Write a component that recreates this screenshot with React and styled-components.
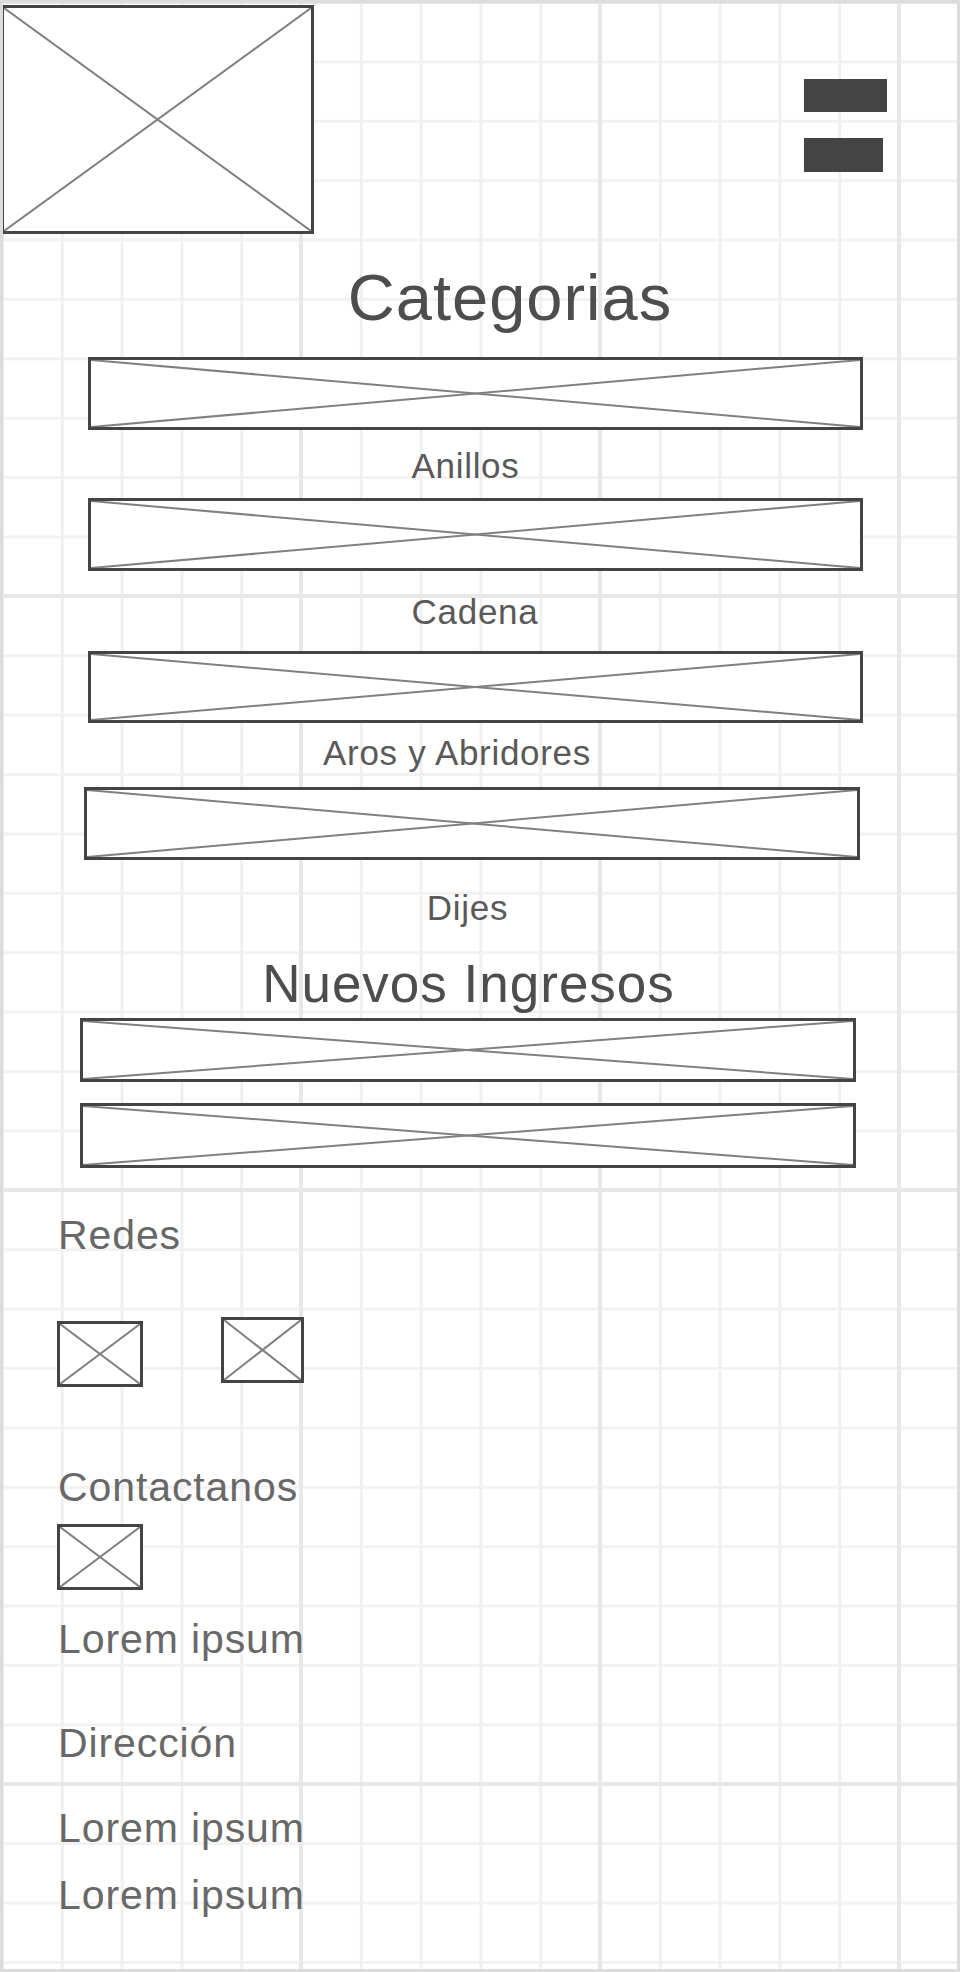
import React from 'react';
import styled, { createGlobalStyle } from 'styled-components';

const GlobalStyle = createGlobalStyle`
  html, body {
    margin: 0;
    padding: 0;
    background: #ffffff;
  }
  body {
    font-family: "Liberation Sans", Arial, sans-serif;
  }
`;

const Page = styled.div`
  box-sizing: border-box;
  width: 960px;
  height: 1972px;
  border: 3px solid #dcdcdc;
  overflow: hidden;
  display: flex;
  flex-direction: column;
  background-color: #ffffff;
  background-image:
    linear-gradient(to right, #e8e8e8 4px, transparent 4px),
    linear-gradient(to bottom, #e8e8e8 4px, transparent 4px),
    linear-gradient(to right, #f0f0f0 3px, transparent 3px),
    linear-gradient(to bottom, #f2f2f2 3px, transparent 3px);
  background-size: 299px 100%, 100% 594px, 59.8px 100%, 100% 59.4px;
  background-position: -3px 0, 0 -3px, -2px 0, 0 -2px;
`;

const Header = styled.header`
  display: flex;
  justify-content: space-between;
  align-items: flex-start;
`;

const Menu = styled.div`
  display: flex;
  flex-direction: column;
  align-items: flex-start;
  gap: 26px;
  margin: 76px 70px 0 0;
`;

const MenuBar = styled.span`
  display: block;
  width: ${p => p.$w}px;
  height: ${p => p.$h}px;
  background: #444444;
`;

const Frame = styled.div`
  box-sizing: border-box;
  flex-shrink: 0;
  width: ${p => p.$w}px;
  height: ${p => p.$h}px;
  margin-left: ${p => p.$left || 0}px;
  margin-top: ${p => p.$top || 0}px;
  border: 3px solid #444444;
  background: #ffffff;

  svg {
    display: block;
    width: 100%;
    height: 100%;
  }
  line {
    stroke: #808080;
    stroke-width: 2;
    vector-effect: non-scaling-stroke;
  }
`;

const Title = styled.h2`
  margin: ${p => p.$top}px 0 0 0;
  padding-left: ${p => p.$pl || 0}px;
  padding-right: ${p => p.$pr || 0}px;
  font-size: ${p => p.$size}px;
  line-height: 1;
  font-weight: 400;
  letter-spacing: 1px;
  color: #4d4d4d;
  text-align: center;
`;

const Label = styled.p`
  margin: ${p => p.$top}px 0 0 0;
  padding-right: ${p => p.$pr || 0}px;
  font-size: 35px;
  line-height: 1;
  letter-spacing: 0.7px;
  color: #595959;
  text-align: center;
`;

const Footer = styled.footer`
  display: flex;
  flex-direction: column;
  align-items: flex-start;
  padding-left: 54px;
`;

const FooterText = styled.p`
  margin: ${p => p.$top}px 0 0 0;
  padding-left: 1px;
  font-size: 41px;
  line-height: 1;
  letter-spacing: 0.9px;
  color: #686868;
`;

const SocialRow = styled.div`
  display: flex;
  align-items: flex-start;
  gap: 78px;
  margin-top: 61px;
`;

function Placeholder(props) {
  return (
    <Frame {...props}>
      <svg viewBox="0 0 100 100" preserveAspectRatio="none">
        <line x1="0" y1="0" x2="100" y2="100" />
        <line x1="0" y1="100" x2="100" y2="0" />
      </svg>
    </Frame>
  );
}

const categorias = [
  { name: 'Anillos', bar: { top: 27, h: 73, left: 85, w: 775 }, labelTop: 18, pr: 29 },
  { name: 'Cadena', bar: { top: 15, h: 73, left: 85, w: 775 }, labelTop: 23, pr: 10 },
  { name: 'Aros y Abridores', bar: { top: 22, h: 72, left: 85, w: 775 }, labelTop: 12, pr: 46 },
  { name: 'Dijes', bar: { top: 17, h: 73, left: 81, w: 776 }, labelTop: 30, pr: 25 },
];

function App() {
  return (
    <>
      <GlobalStyle />
      <Page>
        <Header>
          <Placeholder $w={313} $h={229} $left={-2} $top={2} />
          <Menu>
            <MenuBar $w={83} $h={33} />
            <MenuBar $w={79} $h={34} />
          </Menu>
        </Header>

        <Title $top={31} $size={65} $pl={60}>Categorias</Title>
        {categorias.map(c => (
          <React.Fragment key={c.name}>
            <Placeholder $w={c.bar.w} $h={c.bar.h} $left={c.bar.left} $top={c.bar.top} />
            <Label $top={c.labelTop} $pr={c.pr}>{c.name}</Label>
          </React.Fragment>
        ))}

        <Title $top={32} $size={53} $pr={23}>Nuevos Ingresos</Title>
        <Placeholder $w={776} $h={64} $left={77} $top={8} />
        <Placeholder $w={776} $h={65} $left={77} $top={21} />

        <Footer>
          <FooterText $top={47}>Redes</FooterText>
          <SocialRow>
            <Placeholder $w={86} $h={66} $top={4} />
            <Placeholder $w={83} $h={66} />
          </SocialRow>
          <FooterText $top={80}>Contactanos</FooterText>
          <Placeholder $w={86} $h={66} $top={16} />
          <FooterText $top={29}>Lorem ipsum</FooterText>
          <FooterText $top={63}>Dirección</FooterText>
          <FooterText $top={44}>Lorem ipsum</FooterText>
          <FooterText $top={26}>Lorem ipsum</FooterText>
        </Footer>
      </Page>
    </>
  );
}

export default App;
